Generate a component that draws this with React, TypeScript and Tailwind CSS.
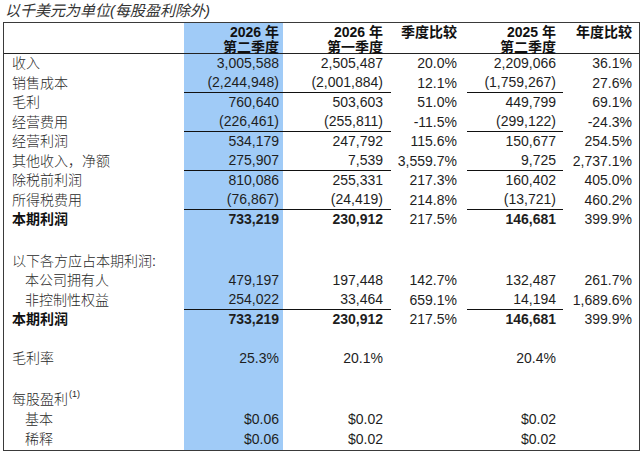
const SANS = { fontFamily: '"Liberation Sans", "Noto Sans CJK SC", sans-serif' }

type Row = {
  label: string
  vals?: string[]
  bold?: boolean
  line?: boolean
  indent?: boolean
  h?: string
  sup?: string
}

const rows: Row[] = [
  { label: '收入', vals: ['3,005,588', '2,505,487', '20.0%', '2,209,066', '36.1%'] },
  { label: '销售成本', vals: ['(2,244,948)', '(2,001,884)', '12.1%', '(1,759,267)', '27.6%'], line: true },
  { label: '毛利', vals: ['760,640', '503,603', '51.0%', '449,799', '69.1%'] },
  { label: '经营费用', vals: ['(226,461)', '(255,811)', '-11.5%', '(299,122)', '-24.3%'], line: true },
  { label: '经营利润', vals: ['534,179', '247,792', '115.6%', '150,677', '254.5%'] },
  { label: '其他收入，净额', vals: ['275,907', '7,539', '3,559.7%', '9,725', '2,737.1%'], line: true },
  { label: '除税前利润', vals: ['810,086', '255,331', '217.3%', '160,402', '405.0%'] },
  { label: '所得税费用', vals: ['(76,867)', '(24,419)', '214.8%', '(13,721)', '460.2%'], line: true },
  { label: '本期利润', vals: ['733,219', '230,912', '217.5%', '146,681', '399.9%'], bold: true },
  { label: '', h: 'h-[22px]' },
  { label: '以下各方应占本期利润:' },
  { label: '本公司拥有人', vals: ['479,197', '197,448', '142.7%', '132,487', '261.7%'], indent: true },
  { label: '非控制性权益', vals: ['254,022', '33,464', '659.1%', '14,194', '1,689.6%'], indent: true, line: true },
  { label: '本期利润', vals: ['733,219', '230,912', '217.5%', '146,681', '399.9%'], bold: true },
  { label: '' },
  { label: '毛利率', vals: ['25.3%', '20.1%', '', '20.4%', ''] },
  { label: '', h: 'h-[21px]' },
  { label: '每股盈利', sup: '(1)', h: 'h-[20px]' },
  { label: '基本', vals: ['$0.06', '$0.02', '', '$0.02', ''], indent: true, h: 'h-[20px]' },
  { label: '稀释', vals: ['$0.06', '$0.02', '', '$0.02', ''], indent: true, h: 'h-[20px]' },
]

// widths and right paddings of the five value columns
const cols = [
  'w-[99px] pr-[4px] bg-[#a0cbf7]',
  'w-[108px] pr-[8px]',
  'w-[76px] pr-[10px]',
  'w-[96px] pr-[7px]',
  'w-[76px] pr-[7px]',
]

function DataRow({ row }: { row: Row }) {
  const h = row.h ?? 'h-[19.5px]'
  return (
    <div className={`flex ${h}`}>
      <div
        className={`w-[180px] flex items-center text-[14px] text-[#2a2a2a] ${row.indent ? 'pl-[21px]' : 'pl-[8px]'} ${row.bold ? 'font-bold text-[#111]' : 'font-light'}`}
      >
        {row.label}
        {row.sup && <sup className="text-[9px] ml-[1px] -mt-[3px]">{row.sup}</sup>}
      </div>
      {cols.map((c, i) => (
        <div
          key={i}
          className={`${c} flex items-center justify-end text-[14px] text-[#1e1e1e] ${row.line && i !== 2 && i !== 4 ? 'border-b border-[#111]' : ''} ${row.bold && i !== 2 && i !== 4 ? 'font-bold' : ''}`}
        >
          {row.vals?.[i]}
        </div>
      ))}
    </div>
  )
}

export default function App() {
  return (
    <div className="w-[640px] h-[452px] bg-white overflow-hidden" style={SANS}>
      <div className="h-[22px] pl-[5px] flex items-center text-[15px] italic text-[#333]">
        以千美元为单位(每股盈利除外)
      </div>
      <div className="ml-[3px] w-[637px] border border-[#3a3a3a]">
        <div className="flex h-[31px] border-b border-[#222] text-[14px] font-bold leading-[15px] text-[#111]">
          <div className="w-[180px]" />
          <div className="w-[99px] pr-[4px] pt-[2px] bg-[#a0cbf7] text-right">
            <div>2026 年</div>
            <div>第二季度</div>
          </div>
          <div className="w-[108px] pr-[8px] pt-[2px] text-right">
            <div>2026 年</div>
            <div>第一季度</div>
          </div>
          <div className="w-[76px] pr-[10px] pt-[2px] text-right">季度比较</div>
          <div className="w-[96px] pr-[7px] pt-[2px] text-right">
            <div>2025 年</div>
            <div>第二季度</div>
          </div>
          <div className="w-[76px] pr-[7px] pt-[2px] text-right">年度比较</div>
        </div>
        {rows.map((r, i) => (
          <DataRow key={i} row={r} />
        ))}
      </div>
    </div>
  )
}
